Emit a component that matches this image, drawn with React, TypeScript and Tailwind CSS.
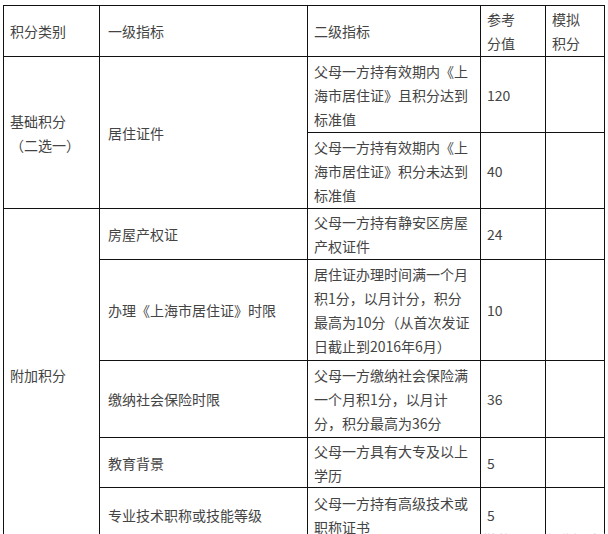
import React from 'react'

// 静安区入学积分表（截图复刻）
type Row = { level2: string[]; score: string }

const BASE_ROWS: Row[] = [
  { level2: ['父母一方持有效期内《上', '海市居住证》且积分达到', '标准值'], score: '120' },
  { level2: ['父母一方持有效期内《上', '海市居住证》积分未达到', '标准值'], score: '40' },
]

const EXTRA_ROWS: { level1: string; level2: string[]; score: string; h: string }[] = [
  { level1: '房屋产权证', level2: ['父母一方持有静安区房屋', '产权证件'], score: '24', h: 'h-[51px]' },
  {
    level1: '办理《上海市居住证》时限',
    level2: ['居住证办理时间满一个月', '积1分，以月计分，积分', '最高为10分（从首次发证', '日截止到2016年6月）'],
    score: '10',
    h: 'h-[101px]',
  },
  { level1: '缴纳社会保险时限', level2: ['父母一方缴纳社会保险满', '一个月积1分，以月计', '分，积分最高为36分'], score: '36', h: 'h-[77px]' },
  { level1: '教育背景', level2: ['父母一方具有大专及以上', '学历'], score: '5', h: 'h-[50px]' },
  { level1: '专业技术职称或技能等级', level2: ['父母一方持有高级技术或', '职称证书'], score: '5', h: 'h-[54px]' },
]

const cell = 'border border-[#111] align-middle px-[6px] py-0'

function Lines({ lines }: { lines: string[] }) {
  return (
    <>
      {lines.map((l, i) => (
        <div key={i}>{l}</div>
      ))}
    </>
  )
}

export default function App() {
  return (
    <div
      className="relative bg-white min-h-[534px] pt-[5px] pl-[3px] text-[14px] leading-[24px] text-[#444]"
      style={{ fontFamily: '"Noto Sans CJK SC", "Noto Sans", sans-serif' }}
    >
      <table className="table-fixed border-collapse w-[601px]">
        <colgroup>
          <col className="w-[96px]" />
          <col className="w-[208px]" />
          <col className="w-[173px]" />
          <col className="w-[65px]" />
          <col className="w-[59px]" />
        </colgroup>
        <tbody>
          <tr className="h-[51px]">
            <td className={cell}>积分类别</td>
            <td className={cell + ' pl-[8px]'}>一级指标</td>
            <td className={cell}>二级指标</td>
            <td className={cell}>
              <Lines lines={['参考', '分值']} />
            </td>
            <td className={cell}>
              <Lines lines={['模拟', '积分']} />
            </td>
          </tr>
          {BASE_ROWS.map((r, i) => (
            <tr key={i} className="h-[76px]">
              {i === 0 && (
                <>
                  <td rowSpan={2} className={cell}>
                    <Lines lines={['基础积分', '（二选一）']} />
                  </td>
                  <td rowSpan={2} className={cell + ' pl-[8px]'}>
                    居住证件
                  </td>
                </>
              )}
              <td className={cell}>
                <Lines lines={r.level2} />
              </td>
              <td className={cell}>{r.score}</td>
              <td className={cell}></td>
            </tr>
          ))}
          {EXTRA_ROWS.map((r, i) => (
            <tr key={r.level1} className={r.h}>
              {i === 0 && (
                <td rowSpan={EXTRA_ROWS.length} className={cell}>
                  附加积分
                </td>
              )}
              <td className={cell + ' pl-[8px]'}>{r.level1}</td>
              <td className={cell}>
                <Lines lines={r.level2} />
              </td>
              <td className={cell}>{r.score}</td>
              <td className={cell}></td>
            </tr>
          ))}
        </tbody>
      </table>
      {/* 水印，只露出顶边 */}
      <div className="absolute left-[482px] top-[530px] text-[15px] leading-[20px] text-[#cfcfcf] whitespace-nowrap">
        微信号：小升初资讯
      </div>
    </div>
  )
}
